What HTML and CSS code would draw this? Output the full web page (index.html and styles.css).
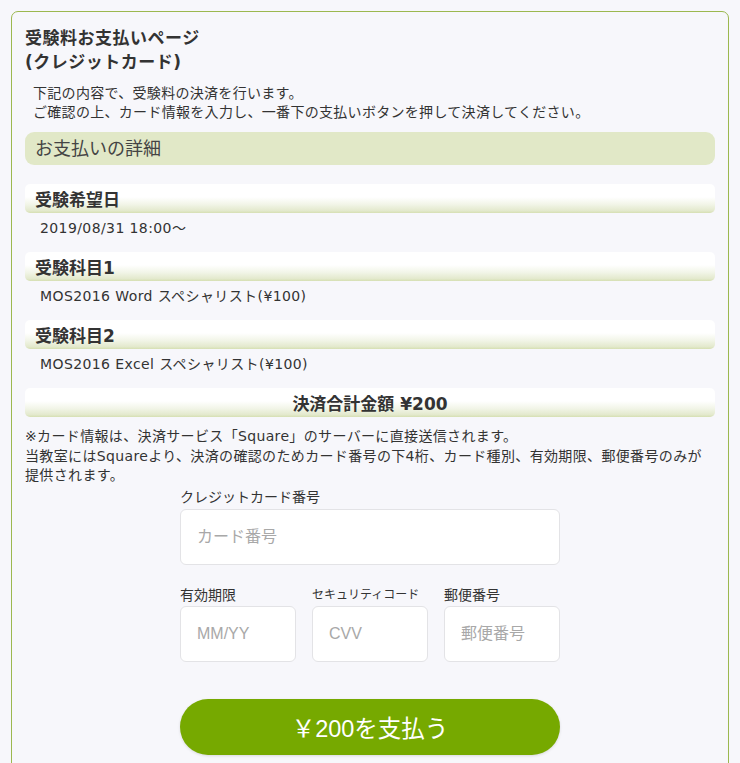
FILE: index.html
```html
<!DOCTYPE html>
<html lang="ja">
<head>
<meta charset="utf-8">
<title>受験料お支払いページ</title>
<link rel="stylesheet" href="styles.css">
</head>
<body>
<div class="panel">
  <h1 class="title">受験料お支払いページ<br>(クレジットカード)</h1>
  <p class="lead">下記の内容で、受験料の決済を行います。<br>ご確認の上、カード情報を入力し、一番下の支払いボタンを押して決済してください。</p>
  <div class="section-bar">お支払いの詳細</div>

  <div class="item-head">受験希望日</div>
  <div class="item-value">2019/08/31 18:00〜</div>

  <div class="item-head">受験科目1</div>
  <div class="item-value">MOS2016 Word スペシャリスト(¥100)</div>

  <div class="item-head">受験科目2</div>
  <div class="item-value">MOS2016 Excel スペシャリスト(¥100)</div>

  <div class="item-head total">決済合計金額 ¥200</div>
  <p class="note">※カード情報は、決済サービス「Square」のサーバーに直接送信されます。<br>当教室にはSquareより、決済の確認のためカード番号の下4桁、カード種別、有効期限、郵便番号のみが<br>提供されます。</p>

  <form class="card-form">
    <label class="field-label">クレジットカード番号</label>
    <input class="field" type="text" placeholder="カード番号">
    <div class="row">
      <div class="col">
        <label class="field-label small">有効期限</label>
        <input class="field" type="text" placeholder="MM/YY">
      </div>
      <div class="col">
        <label class="field-label tiny">セキュリティコード</label>
        <input class="field" type="text" placeholder="CVV">
      </div>
      <div class="col">
        <label class="field-label small">郵便番号</label>
        <input class="field" type="text" placeholder="郵便番号">
      </div>
    </div>
    <button class="pay" type="button">￥200を支払う</button>
  </form>
</div>
</body>
</html>
```
FILE: styles.css
```css
html, body {
  margin: 0;
  padding: 0;
  background: #f7f7fb;
}
body {
  padding: 11px 11px 0 11px;
  font-family: "DejaVu Sans", "Noto Sans CJK JP", sans-serif;
  color: #333;
}
.panel {
  border: 1px solid #9cb84f;
  border-radius: 7px;
  background: #f7f7fb;
  padding: 14px 13px 40px 13px;
}
.title {
  margin: 0;
  font-size: 17px;
  line-height: 24px;
  font-weight: bold;
  letter-spacing: 0.5px;
  color: #333;
}
.lead {
  margin: 10px 0 0 0;
  padding-left: 8px;
  font-size: 14px;
  line-height: 19px;
  letter-spacing: 0.3px;
}
.section-bar {
  margin-top: 10px;
  height: 33px;
  line-height: 34px;
  padding-left: 10px;
  background: #e1e8c7;
  border-radius: 9px;
  font-size: 18px;
  color: #444;
}
.item-head {
  margin-top: 19px;
  height: 29px;
  line-height: 32px;
  padding-left: 10px;
  border-radius: 5px;
  font-size: 17px;
  font-weight: bold;
  background: linear-gradient(to bottom, #ffffff 0%, #ffffff 45%, #f2f5e8 70%, #e3e9cd 92%, #d6dfb2 100%);
}
.item-value + .item-head {
  margin-top: 0;
}
.item-value {
  padding: 5px 15px 14px 15px;
  font-size: 14px;
  line-height: 20px;
  letter-spacing: 0.4px;
}
.item-head.total {
  text-align: center;
  padding-left: 0;
}
.note {
  margin: 10px 0 0 0;
  font-size: 14px;
  line-height: 19.5px;
  letter-spacing: 0.35px;
}
.card-form {
  width: 380px;
  margin: 2px auto 0 auto;
  font-family: "Liberation Sans", "Noto Sans CJK JP", sans-serif;
}
.field-label {
  display: block;
  font-size: 14px;
  line-height: 18px;
  margin-bottom: 3px;
  color: #333;
}
.row .field-label {
  line-height: 20px;
  margin-bottom: 1px;
}
.field-label.tiny {
  font-size: 12px;
}
.field {
  display: block;
  box-sizing: border-box;
  width: 100%;
  height: 56px;
  border: 1px solid #e3e3e6;
  border-radius: 6px;
  background: #fff;
  padding: 0 16px;
  font-family: "Liberation Sans", "Noto Sans CJK JP", sans-serif;
  font-size: 16px;
  color: #333;
  outline: none;
}
.field::placeholder {
  color: #a8a8a8;
}
.row {
  display: grid;
  grid-template-columns: 1fr 1fr 1fr;
  column-gap: 16px;
  margin-top: 20px;
}
.col {
  min-width: 0;
}
.pay {
  display: block;
  width: 100%;
  height: 56px;
  margin-top: 37px;
  border: none;
  border-radius: 28px;
  background: #76a900;
  color: #fff;
  font-family: "Liberation Sans", "Noto Sans CJK JP", sans-serif;
  font-size: 23.5px;
  box-shadow: 0 1px 3px rgba(0,0,0,0.12);
}
```
